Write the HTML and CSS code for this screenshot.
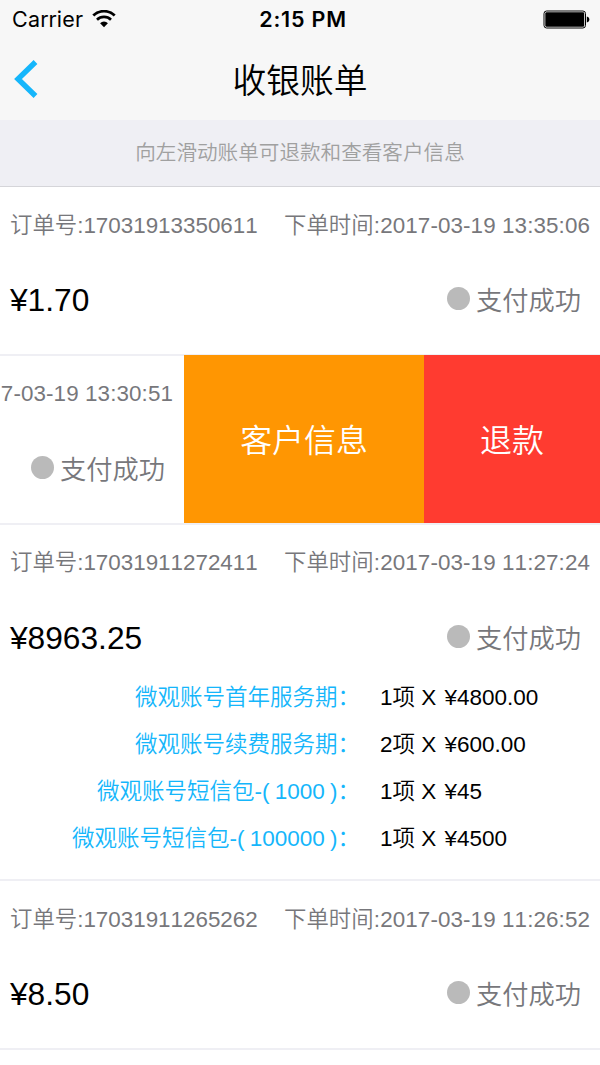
FILE: index.html
```html
<!DOCTYPE html>
<html lang="zh-CN">

<head>
    <meta charset="UTF-8">
    <meta name="viewport" content="width=device-width, initial-scale=1.0">
    <title>收银账单</title>
    <link rel="stylesheet" href="styles.css">
</head>

<body>
    <header class="header">
        <div class="status-bar">
            <div class="carrier">
                <span>Carrier</span>
                <svg class="wifi" width="24" height="18" viewBox="0 0 24 18">
                    <path d="M1.3 5.6a15.2 15.2 0 0 1 21.4 0" fill="none" stroke="#000" stroke-width="2.8"/>
                    <path d="M5 9.8a10 10 0 0 1 14 0" fill="none" stroke="#000" stroke-width="2.7"/>
                    <path d="M12 17.2l-3.9-4a5.6 5.6 0 0 1 7.8 0z"/>
                </svg>
            </div>
            <div class="clock">2:15 PM</div>
            <svg class="battery" width="47" height="19" viewBox="0 0 47 19">
                <rect x="1" y="1" width="41.5" height="17" rx="2.6" fill="none" stroke="#000" stroke-width="1"/>
                <rect x="2.3" y="2.3" width="38.9" height="14.4" rx="1.2"/>
                <path d="M43.8 6.5c3.4.6 3.4 5.4 0 6z"/>
            </svg>
        </div>
        <div class="nav-bar">
            <svg class="back" width="24" height="38" viewBox="0 0 24 38">
                <path d="M21.5 2L4 19l17.5 17" fill="none" stroke="#15b6fb" stroke-width="5.4"/>
            </svg>
            <h1 class="title">收银账单</h1>
        </div>
    </header>

    <p class="tip">向左滑动账单可退款和查看客户信息</p>

    <!-- Bill list -->
    <ul class="bills">
        <li class="bill">
            <div class="bill-body">
                <div class="bill-info">
                    <span>订单号:17031913350611</span>
                    <span class="time">下单时间:2017-03-19 13:35:06</span>
                </div>
                <div class="bill-pay">
                    <span class="amount">¥1.70</span>
                    <span class="state"><i class="dot"></i>支付成功</span>
                </div>
            </div>
        </li>
        <!-- Swiped open -->
        <li class="bill swiped">
            <div class="bill-body">
                <div class="bill-info">
                    <span class="time">7-03-19 13:30:51</span>
                </div>
                <div class="bill-pay">
                    <span class="state"><i class="dot"></i>支付成功</span>
                </div>
            </div>
            <button class="action customer">客户信息</button>
            <button class="action refund">退款</button>
        </li>
        <li class="bill">
            <div class="bill-body">
                <div class="bill-info">
                    <span>订单号:17031911272411</span>
                    <span class="time">下单时间:2017-03-19 11:27:24</span>
                </div>
                <div class="bill-pay">
                    <span class="amount">¥8963.25</span>
                    <span class="state"><i class="dot"></i>支付成功</span>
                </div>
                <dl class="items">
                    <dt>微观账号首年服务期：</dt>
                    <dd>1项 X <span class="price">¥4800.00</span></dd>
                    <dt>微观账号续费服务期：</dt>
                    <dd>2项 X <span class="price">¥600.00</span></dd>
                    <dt>微观账号短信包-( 1000 )：</dt>
                    <dd>1项 X <span class="price">¥45</span></dd>
                    <dt>微观账号短信包-( 100000 )：</dt>
                    <dd>1项 X <span class="price">¥4500</span></dd>
                </dl>
            </div>
        </li>
        <li class="bill">
            <div class="bill-body">
                <div class="bill-info">
                    <span>订单号:17031911265262</span>
                    <span class="time">下单时间:2017-03-19 11:26:52</span>
                </div>
                <div class="bill-pay">
                    <span class="amount">¥8.50</span>
                    <span class="state"><i class="dot"></i>支付成功</span>
                </div>
            </div>
        </li>
    </ul>
</body>

</html>
```

FILE: styles.css
```css
* {
    box-sizing: border-box;
}

body {
    margin: 0;
    background-color: #fff;
    color: #000;
    font-family: "Liberation Sans", "Noto Sans CJK SC", sans-serif;
    font-weight: 350;
    font-kerning: none;
    overflow: hidden;
}

.header {
    height: 120px;
    background-color: #f7f7f7;
}

.status-bar {
    display: grid;
    grid-template-columns: 1fr auto 1fr;
    align-items: center;
    height: 38px;
    padding: 0 10px 0 12px;
    font-family: Inter, sans-serif;
    font-size: 21.5px;
    font-weight: 400;
}

.carrier {
    display: flex;
    align-items: center;
    gap: 9px;
    letter-spacing: 0.2px;
}

.clock {
    margin-left: 4px;
    font-weight: 600;
    letter-spacing: 0.8px;
}

.battery {
    justify-self: end;
}

.nav-bar {
    display: grid;
    grid-template-columns: 60px 1fr 60px;
    align-items: center;
    height: 82px;
}

.back {
    margin-left: 14px;
}

.title {
    margin: 3px 0 0;
    font-size: 33.75px;
    font-weight: 350;
    line-height: 50px;
    text-align: center;
}

.tip {
    height: 67px;
    margin: 0;
    border-bottom: 1.5px solid #d5d5d9;
    background-color: #efeff4;
    color: #a0a0a0;
    font-size: 20.6px;
    line-height: 65px;
    text-align: center;
}

.bills {
    margin: 0;
    padding: 0;
    list-style: none;
}

.bill {
    display: flex;
    min-height: 168.75px;
    border-bottom: 2px solid #efeff4;
}

.bill-body {
    flex: 1;
    padding: 23.5px 10px 0;
    color: #77777b;
}

.bill-info {
    display: flex;
    justify-content: space-between;
    font-size: 22.4px;
    line-height: 30px;
    white-space: nowrap;
}

.time {
    letter-spacing: 0.1px;
}

.bill-pay {
    display: flex;
    align-items: center;
    justify-content: space-between;
    height: 40px;
    margin-top: 40px;
    padding-right: 9px;
}

.amount {
    color: #000;
    font-size: 31.7px;
}

.state {
    display: flex;
    align-items: center;
    gap: 6px;
    margin: -3px 0 0 auto;
    font-size: 26.25px;
    white-space: nowrap;
}

.dot {
    width: 23px;
    height: 23px;
    margin-top: -1px;
    border-radius: 50%;
    background-color: #bababa;
}

.swiped .bill-body {
    width: 184px;
    flex: none;
}

.swiped .bill-info {
    justify-content: flex-end;
    padding-right: 1px;
}

.action {
    margin: -1px 0 0;
    padding: 0 0 2px;
    border: 0;
    color: #fff;
    font-family: inherit;
    font-size: 31.9px;
    font-weight: 350;
}

.customer {
    width: 240px;
    background-color: #ff9602;
}

.refund {
    width: 176px;
    background-color: #ff3b30;
}

.items {
    display: grid;
    grid-template-columns: 350px 1fr;
    column-gap: 20px;
    margin: 17px 0 16.8px;
    font-size: 22.5px;
    line-height: 46.9px;
}

.items dt {
    color: #15b6fb;
    text-align: right;
    white-space: nowrap;
    word-spacing: -1px;
}

.items dd {
    margin: 0;
    color: #000;
}

.price {
    margin-left: 2px;
}
```
